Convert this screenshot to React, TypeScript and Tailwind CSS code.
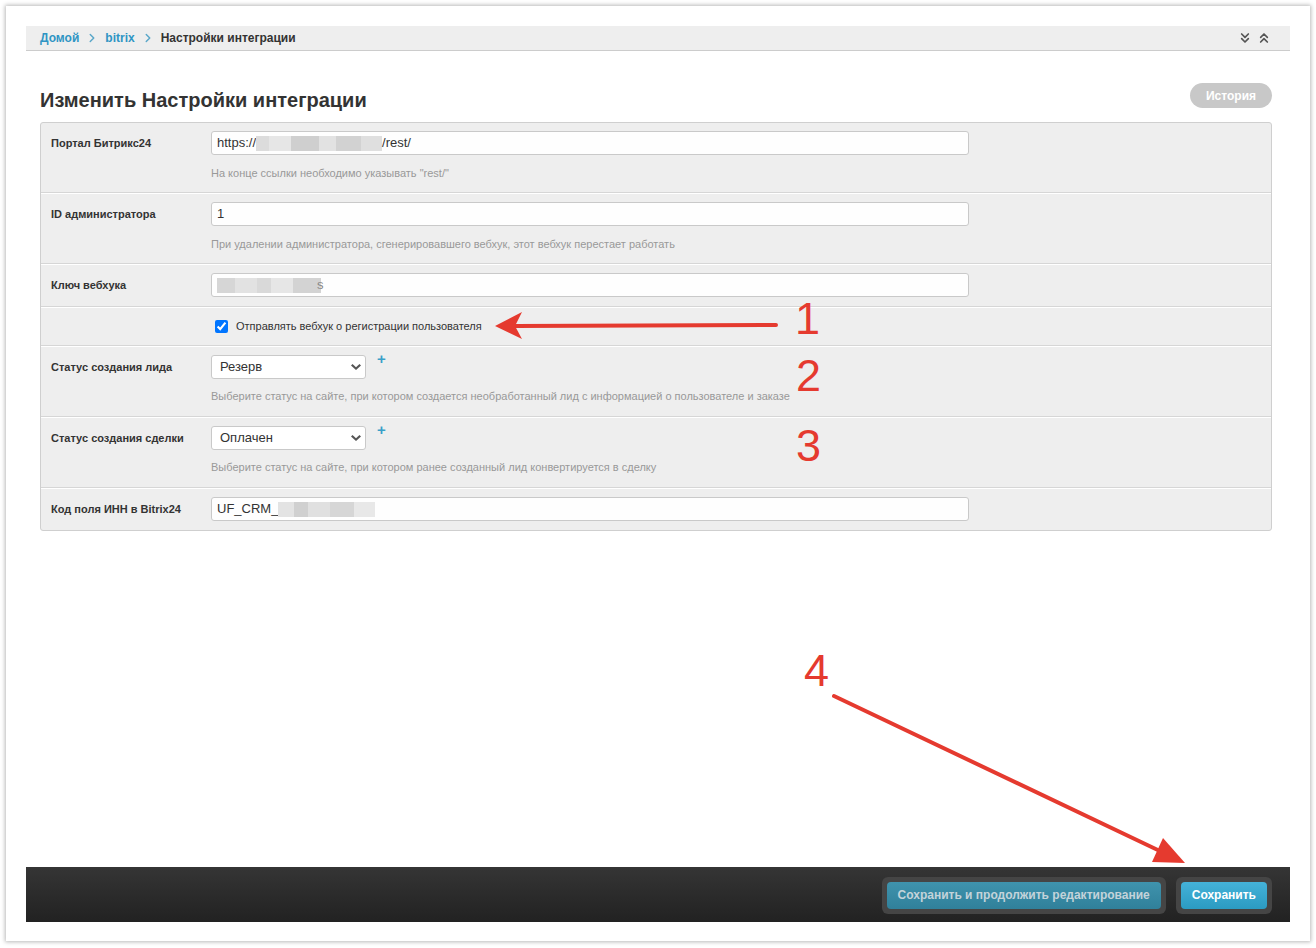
import React from "react";
import { ChevronsDown, ChevronsUp, ChevronRight } from "lucide-react";

// Bitrix-style admin form: "Изменить Настройки интеграции" with red annotations on top.

type Seg = [number, string];

const blurUrl: Seg[] = [
  [13, "#dcdcdc"], [22, "#e6e6e6"], [28, "#cfcfcf"], [17, "#e2e2e2"], [25, "#d2d2d2"], [21, "#dfdfdf"],
];
const blurKey: Seg[] = [
  [18, "#d6d6d6"], [22, "#e2e2e2"], [14, "#d9d9d9"], [22, "#e6e6e6"], [28, "#d3d3d3"],
];
const blurCode: Seg[] = [
  [16, "#e3e3e3"], [14, "#d0d0d0"], [22, "#e0e0e0"], [24, "#d6d6d6"], [21, "#e8e8e8"],
];

function Blur({ segs }: { segs: Seg[] }) {
  return (
    <span className="flex h-[15px]">
      {segs.map(([w, c], i) => (
        <span key={i} className="h-full" style={{ width: w, background: c }} />
      ))}
    </span>
  );
}

function Field({ children }: { children: React.ReactNode }) {
  return (
    <div className="flex h-[24px] w-[758px] items-center rounded-[3px] border border-[#c9c9c9] bg-[#fefefe] px-[5px] text-[13px] text-[#333]">
      {children}
    </div>
  );
}

function Select({ value }: { value: string }) {
  return (
    <div className="flex h-[24px] w-[155px] items-center justify-between rounded-[3px] border border-[#c9c9c9] bg-white pl-[8px] pr-[4px] text-[13px] text-[#333]">
      <span>{value}</span>
      <svg width="10" height="7" viewBox="0 0 10 7">
        <path d="M0 1.5 L1.5 0 L5 3.2 L8.5 0 L10 1.5 L5 6 Z" fill="#555" />
      </svg>
    </div>
  );
}

function Hint({ children }: { children: React.ReactNode }) {
  return <div className="mt-[11px] text-[11px] leading-[14px] text-[#999]">{children}</div>;
}

function Row({
  label,
  children,
  first,
  last,
  pb = "pb-[8px]",
}: {
  label?: string;
  children: React.ReactNode;
  first?: boolean;
  last?: boolean;
  pb?: string;
}) {
  return (
    <div
      className={`flex pt-[8px] ${pb} ${first ? "" : "border-t border-t-white"} ${
        last ? "" : "border-b border-b-[#d6d6d6]"
      }`}
    >
      <div className="w-[170px] shrink-0 pl-[10px] text-[11px] font-bold leading-[24px] text-[#333]">{label}</div>
      <div className="flex flex-col">{children}</div>
    </div>
  );
}

function Annotations() {
  return (
    <div className="pointer-events-none absolute inset-0">
      <svg width="1316" height="948" className="absolute left-0 top-0">
        <line x1="776" y1="325" x2="515" y2="326" stroke="#e53a2f" strokeWidth="4" strokeLinecap="round" />
        <path d="M495 326 L522 312 L515 326 L522 339 Z" fill="#e53a2f" />
        <line x1="834" y1="696" x2="1162" y2="852" stroke="#e53a2f" strokeWidth="4" strokeLinecap="round" />
        <path d="M1185 863 L1163 838 L1152 862 Z" fill="#e53a2f" />
      </svg>
      <span className="absolute left-[795px] top-[294px] text-[45px] leading-[50px] text-[#e53a2f]">1</span>
      <span className="absolute left-[796px] top-[351px] text-[45px] leading-[50px] text-[#e53a2f]">2</span>
      <span className="absolute left-[796px] top-[421px] text-[45px] leading-[50px] text-[#e53a2f]">3</span>
      <span className="absolute left-[804px] top-[646px] text-[45px] leading-[50px] text-[#e53a2f]">4</span>
    </div>
  );
}

export default function App() {
  return (
    <div className="relative min-h-screen bg-white p-[6px] font-['Liberation_Sans',Arial,sans-serif]">
      <div className="flex h-[935px] w-[1304px] flex-col bg-white px-5 pb-[19px] pt-5 shadow-[0_0_4px_1px_rgba(0,0,0,0.28)]">
        {/* Breadcrumbs */}
        <div className="flex h-[25px] items-center justify-between border-b border-b-[#cccccc] bg-[#eeeeee] pl-[14px] pr-[18px] text-[12px] font-bold">
          <div className="flex items-center gap-[6px]">
            <span className="text-[#2f95c4]">Домой</span>
            <ChevronRight size={14} strokeWidth={2.5} className="text-[#5aa7c9]" />
            <span className="text-[#2f95c4]">bitrix</span>
            <ChevronRight size={14} strokeWidth={2.5} className="text-[#5aa7c9]" />
            <span className="text-[#333]">Настройки интеграции</span>
          </div>
          <div className="flex items-center gap-[3px] text-[#555]">
            <ChevronsDown size={16} strokeWidth={2.5} />
            <ChevronsUp size={16} strokeWidth={2.5} />
          </div>
        </div>

        {/* Title */}
        <div className="ml-[14px] mr-[18px] mt-[31px] flex items-start justify-between">
          <h2 className="mt-[7px] text-[20px] font-bold leading-[22px] text-[#333]">Изменить Настройки интеграции</h2>
          <button className="mt-[1px] h-[25px] w-[82px] rounded-full bg-[#c8c8c8] text-[12px] font-bold text-white">
            История
          </button>
        </div>

        {/* Form */}
        <div className="ml-[14px] mr-[18px] mt-[11px] rounded-[3px] border border-[#cfcfcf] bg-[#eeeeee]">
          <Row label="Портал Битрикс24" first pb="pb-[12px]">
            <Field>
              <span>https://</span>
              <Blur segs={blurUrl} />
              <span>/rest/</span>
            </Field>
            <Hint>На конце ссылки необходимо указывать "rest/"</Hint>
          </Row>
          <Row label="ID администратора" pb="pb-[12px]">
            <Field>1</Field>
            <Hint>При удалении администратора, сгенерировавшего вебхук, этот вебхук перестает работать</Hint>
          </Row>
          <Row label="Ключ вебхука" pb="pb-[9px]">
            <Field>
              <Blur segs={blurKey} />
              <span className="-ml-[4px] text-[#888]">s</span>
            </Field>
          </Row>
          <div className="flex border-b border-t border-b-[#d6d6d6] border-t-white pb-[12px] pt-[12px]">
            <div className="w-[170px] shrink-0" />
            <label className="flex items-center text-[11px] leading-[13px] text-[#333]">
              <input type="checkbox" defaultChecked className="ml-[4px] mr-[8px] h-[13px] w-[13px] accent-[#0075ff]" />
              Отправлять вебхук о регистрации пользователя
            </label>
          </div>
          <Row label="Статус создания лида" pb="pb-[13px]">
            <div className="flex items-start">
              <Select value="Резерв" />
              <span className="-mt-[4px] ml-[11px] text-[15px] font-bold leading-[15px] text-[#3aa0c8]">+</span>
            </div>
            <div className="mt-[10px] text-[11px] leading-[14px] text-[#999]">
              Выберите статус на сайте, при котором создается необработанный лид с информацией о пользователе и заказе
            </div>
          </Row>
          <Row label="Статус создания сделки" pb="pb-[13px]">
            <div className="flex items-start">
              <Select value="Оплачен" />
              <span className="-mt-[4px] ml-[11px] text-[15px] font-bold leading-[15px] text-[#3aa0c8]">+</span>
            </div>
            <div className="mt-[10px] text-[11px] leading-[14px] text-[#999]">
              Выберите статус на сайте, при котором ранее созданный лид конвертируется в сделку
            </div>
          </Row>
          <Row label="Код поля ИНН в Bitrix24" last pb="pb-[9px]">
            <Field>
              <span>UF_CRM_</span>
              <Blur segs={blurCode} />
            </Field>
          </Row>
        </div>

        <div className="flex-1" />

        {/* Footer */}
        <div className="flex h-[55px] items-center justify-end gap-[10px] bg-gradient-to-b from-[#353535] to-[#222222] pr-[18px] pt-[1px]">
          <div className="rounded-[6px] bg-[#454545] p-[5px]">
            <button className="h-[27px] rounded-[4px] bg-gradient-to-b from-[#3f93ad] to-[#30809a] px-[11px] text-[12px] font-bold text-[#c3d3da]">
              Сохранить и продолжить редактирование
            </button>
          </div>
          <div className="rounded-[6px] bg-[#454545] p-[5px]">
            <button className="h-[27px] rounded-[4px] bg-gradient-to-b from-[#44b2d8] to-[#2b9bc2] px-[11px] text-[12px] font-bold text-white">
              Сохранить
            </button>
          </div>
        </div>
      </div>
      <Annotations />
    </div>
  );
}
